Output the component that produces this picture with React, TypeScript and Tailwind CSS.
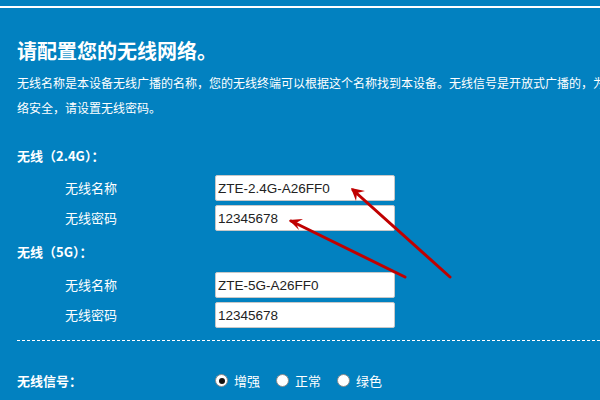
import React from "react";

function Field({ label, value }: { label: string; value: string }) {
  return (
    <div className="flex items-center h-[30px]">
      <span className="w-[198px] pl-[48px] text-[13px] text-white">{label}</span>
      <input
        readOnly
        value={value}
        className="w-[180px] h-[26px] bg-white border border-[#c8c8c8] rounded-[2px] px-[2px] text-[13.5px] text-[#222] font-['Liberation_Sans',sans-serif] outline-none"
      />
    </div>
  );
}

function Radio({ label, checked }: { label: string; checked?: boolean }) {
  return (
    <label className="flex items-center gap-[6px] mr-[16px]">
      <span className="size-[13px] rounded-full bg-white border border-[#8a8a8a] flex items-center justify-center">
        {checked && <span className="size-[6px] rounded-full bg-[#111]" />}
      </span>
      <span className="text-[13px] text-white">{label}</span>
    </label>
  );
}

export default function App() {
  return (
    <div className="relative w-[600px] h-[400px] overflow-hidden bg-[#0281c0] font-['Noto_Sans_CJK_SC',sans-serif]">
      <div className="h-[6px]" />
      <div className="h-[2px] bg-white" />

      <div className="pl-[17px] whitespace-nowrap">
        <h1 className="mt-[29px] text-[20px] leading-[28px] font-bold text-white">请配置您的无线网络。</h1>
        <p className="mt-[5px] text-[12px] leading-[25px] text-white">
          无线名称是本设备无线广播的名称，您的无线终端可以根据这个名称找到本设备。无线信号是开放式广播的，为了保证网
          <br />
          络安全，请设置无线密码。
        </p>

        <div className="mt-[27px] text-[13px] font-bold text-white leading-[18px]">无线（2.4G）：</div>
        <div className="mt-[8px]">
          <Field label="无线名称" value="ZTE-2.4G-A26FF0" />
          <Field label="无线密码" value="12345678" />
        </div>

        <div className="mt-[10px] text-[13px] font-bold text-white leading-[18px]">无线（5G）：</div>
        <div className="mt-[9px]">
          <Field label="无线名称" value="ZTE-5G-A26FF0" />
          <Field label="无线密码" value="12345678" />
        </div>

        <div className="mt-[10px] border-t border-dashed border-white" />

        <div className="mt-[30px] flex items-center">
          <span className="w-[198px] text-[13px] font-bold text-white">无线信号：</span>
          <Radio label="增强" checked />
          <Radio label="正常" />
          <Radio label="绿色" />
        </div>
      </div>

      <svg className="absolute left-0 top-0 pointer-events-none" width="600" height="400" viewBox="0 0 600 400">
        <g stroke="#c00000" strokeWidth="3" strokeLinecap="round" fill="none">
          <line x1="450" y1="277" x2="353" y2="190" />
          <line x1="405" y1="277" x2="291" y2="221" />
        </g>
        <polygon points="351,188 365,191 357,193 356,201" fill="#c00000" />
        <polygon points="289,220 303,219 296,223 299,230" fill="#c00000" />
      </svg>
    </div>
  );
}
